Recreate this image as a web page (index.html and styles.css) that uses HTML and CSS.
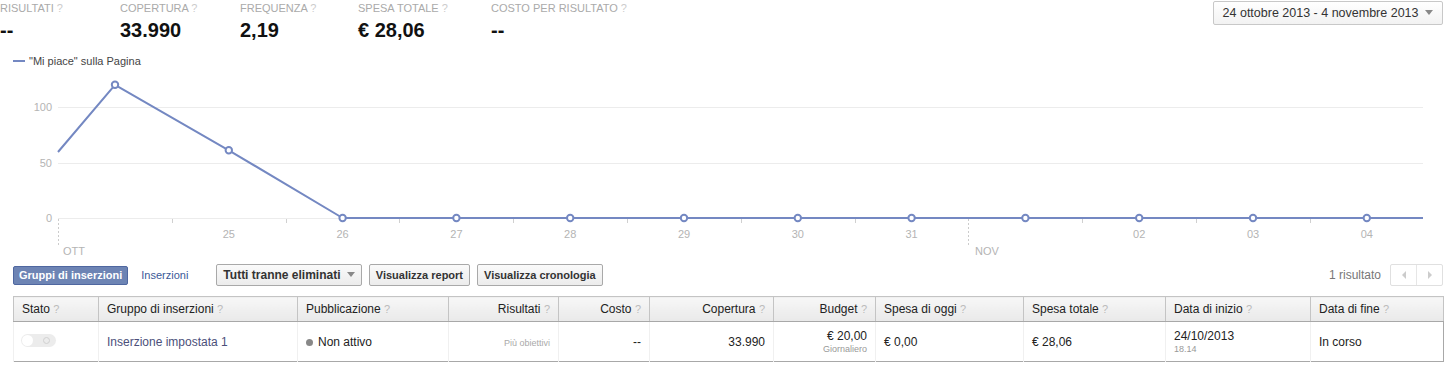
FILE: index.html
```html
<!DOCTYPE html>
<html lang="it">
<head>
<meta charset="UTF-8">
<title>Gruppi di inserzioni</title>
<link rel="stylesheet" href="styles.css">
</head>
<body>

<div class="summary">
    <div class="stats">
        <div class="stat"><div class="stat-label">Risultati <span class="q">?</span></div><div class="stat-value">--</div></div>
        <div class="stat"><div class="stat-label">Copertura <span class="q">?</span></div><div class="stat-value">33.990</div></div>
        <div class="stat"><div class="stat-label">Frequenza <span class="q">?</span></div><div class="stat-value">2,19</div></div>
        <div class="stat"><div class="stat-label">Spesa totale <span class="q">?</span></div><div class="stat-value">€ 28,06</div></div>
        <div class="stat"><div class="stat-label">Costo per risultato <span class="q">?</span></div><div class="stat-value">--</div></div>
    </div>
    <button class="date-range">24 ottobre 2013 - 4 novembre 2013 <span class="caret"></span></button>
</div>

<div class="legend"><span class="legend-line"></span>"Mi piace" sulla Pagina</div>

<svg class="chart" width="1455" height="183" viewBox="0 0 1455 183">
    <g class="grid">
        <line x1="58" y1="32.5" x2="1423" y2="32.5"/>
        <line x1="58" y1="88.5" x2="1423" y2="88.5"/>
        <line x1="58" y1="143.5" x2="1423" y2="143.5"/>
    </g>
    <g class="ylabels">
        <text x="52" y="36">100</text>
        <text x="52" y="92">50</text>
        <text x="52" y="147">0</text>
    </g>
    <g id="ticks" class="ticks"></g>
    <g class="month">
        <line x1="58.5" y1="144" x2="58.5" y2="172"/>
        <line x1="968.5" y1="144" x2="968.5" y2="172"/>
    </g>
    <g class="month-labels">
        <text x="63" y="180">OTT</text>
        <text x="975" y="180">NOV</text>
    </g>
    <g id="xlabels" class="xlabels"></g>
    <polyline id="series" class="series" points=""/>
    <g id="dots" class="dots"></g>
</svg>

<div class="toolbar">
    <div class="toolbar-left">
        <button class="tab active">Gruppi di inserzioni</button>
        <button class="tab">Inserzioni</button>
        <button class="btn filter">Tutti tranne eliminati <span class="caret"></span></button>
        <button class="btn">Visualizza report</button>
        <button class="btn">Visualizza cronologia</button>
    </div>
    <div class="toolbar-right">
        <span class="count">1 risultato</span>
        <div class="pager">
            <span class="pager-btn"><span class="arrow-left"></span></span>
            <span class="pager-btn"><span class="arrow-right"></span></span>
        </div>
    </div>
</div>

<table class="grid-table">
    <colgroup>
        <col style="width: 85px"><col style="width: 199px"><col style="width: 151px"><col style="width: 110px">
        <col style="width: 91px"><col style="width: 124px"><col style="width: 102px"><col style="width: 148px">
        <col style="width: 142px"><col style="width: 145px"><col style="width: 133px">
    </colgroup>
    <thead>
        <tr>
            <th>Stato <span class="q">?</span></th>
            <th>Gruppo di inserzioni <span class="q">?</span></th>
            <th>Pubblicazione <span class="q">?</span></th>
            <th class="num">Risultati <span class="q">?</span></th>
            <th class="num">Costo <span class="q">?</span></th>
            <th class="num">Copertura <span class="q">?</span></th>
            <th class="num">Budget <span class="q">?</span></th>
            <th>Spesa di oggi <span class="q">?</span></th>
            <th>Spesa totale <span class="q">?</span></th>
            <th>Data di inizio <span class="q">?</span></th>
            <th>Data di fine <span class="q">?</span></th>
        </tr>
    </thead>
    <tbody>
        <tr>
            <td><span class="toggle"><span class="knob"></span><span class="ring"></span></span></td>
            <td><a class="name">Inserzione impostata 1</a></td>
            <td><span class="dot"></span>Non attivo</td>
            <td class="num"><span class="muted">Più obiettivi</span></td>
            <td class="num">--</td>
            <td class="num">33.990</td>
            <td class="num">€ 20,00<div class="sub">Giornaliero</div></td>
            <td>€ 0,00</td>
            <td>€ 28,06</td>
            <td class="start">24/10/2013<div class="sub">18.14</div></td>
            <td>In corso</td>
        </tr>
    </tbody>
</table>

<script>
    // valori giornalieri dal 24/10 al 04/11
    const values = [120, 61, 0, 0, 0, 0, 0, 0, 0, 0, 0, 0];
    const step = 113.8;
    const x0 = 115;
    const zeroY = 143;
    const scale = 1.11;
    const svgNs = 'http://www.w3.org/2000/svg';

    const points = ['58,77'];
    const dots = document.getElementById('dots');
    values.forEach((v, i) => {
        const x = x0 + step * i;
        const y = zeroY - v * scale;
        points.push(x + ',' + y);
        const c = document.createElementNS(svgNs, 'circle');
        c.setAttribute('cx', x);
        c.setAttribute('cy', y);
        c.setAttribute('r', 3.2);
        dots.appendChild(c);
    });
    points.push('1423,' + zeroY);
    document.getElementById('series').setAttribute('points', points.join(' '));

    const days = ['', '25', '26', '27', '28', '29', '30', '31', '', '02', '03', '04'];
    const xlabels = document.getElementById('xlabels');
    days.forEach((d, i) => {
        if (!d) return;
        const t = document.createElementNS(svgNs, 'text');
        t.setAttribute('x', x0 + step * i);
        t.setAttribute('y', 163);
        t.textContent = d;
        xlabels.appendChild(t);
    });

    const ticks = document.getElementById('ticks');
    for (let k = 1; k < 12; k++) {
        if (k === 8) continue;
        const x = Math.round(58 + step * k) + 0.5;
        const l = document.createElementNS(svgNs, 'line');
        l.setAttribute('x1', x);
        l.setAttribute('x2', x);
        l.setAttribute('y1', 144);
        l.setAttribute('y2', 148);
        ticks.appendChild(l);
    }
</script>

</body>
</html>
```

FILE: styles.css
```css
body {
    margin: 0;
    font-family: "Liberation Sans", Arial, sans-serif;
    font-size: 12px;
    color: #333;
    background: #fff;
}

button {
    font-family: inherit;
    cursor: pointer;
}

.q {
    color: #bbb;
    font-weight: normal;
    font-size: 11px;
}

.summary {
    display: flex;
    justify-content: space-between;
    align-items: flex-start;
    padding-right: 12px;
}

.stats {
    display: grid;
    grid-template-columns: 120px 120px 118px 133px auto;
    padding-top: 1px;
}

.stat-label {
    font-size: 11px;
    line-height: 14px;
    color: #aaa;
    text-transform: uppercase;
}

.stat-label .q {
    color: #ccc;
}

.stat-value {
    margin-top: 3px;
    font-size: 20px;
    line-height: 24px;
    font-weight: bold;
    color: #111;
}

.date-range {
    margin-top: 1px;
    height: 24px;
    padding: 0 9px 0 9px;
    font-size: 12.5px;
    color: #333;
    background: linear-gradient(#fff, #f2f2f2);
    border: 1px solid #c8c8c8;
    border-radius: 2px;
}

.caret {
    display: inline-block;
    width: 0;
    height: 0;
    margin-left: 3px;
    vertical-align: 2px;
    border-left: 4px solid transparent;
    border-right: 4px solid transparent;
    border-top: 5px solid #888;
}

.legend {
    margin: 12px 0 0 13px;
    font-size: 11px;
    line-height: 14px;
    color: #444;
}

.legend-line {
    display: inline-block;
    width: 12px;
    height: 2px;
    margin-right: 4px;
    vertical-align: 3px;
    background: #7488c2;
}

.chart {
    display: block;
    margin-top: 7px;
}

.chart .grid line {
    stroke: #ececec;
    stroke-width: 1;
}

.chart text {
    font-family: "Liberation Sans", Arial, sans-serif;
    font-size: 11px;
    fill: #b4b4b4;
}

.chart .ylabels text {
    text-anchor: end;
}

.chart .xlabels text {
    text-anchor: middle;
}

.chart .ticks line {
    stroke: #d0d0d0;
}

.chart .month line {
    stroke: #ccc;
    stroke-dasharray: 2 2;
}

.series {
    fill: none;
    stroke: #7488c2;
    stroke-width: 2;
    stroke-linejoin: round;
}

.dots circle {
    fill: #fff;
    stroke: #7488c2;
    stroke-width: 2;
}

.toolbar {
    display: flex;
    justify-content: space-between;
    align-items: center;
    margin: 6px 12px 0 13px;
    height: 22px;
}

.toolbar-left,
.toolbar-right {
    display: flex;
    align-items: center;
}

.tab {
    height: 19px;
    padding: 0 5px;
    font-size: 11px;
    font-weight: bold;
    color: #3b5998;
    background: none;
    border: 1px solid transparent;
    border-radius: 2px;
}

.tab.active {
    color: #fff;
    background: #6d84b4;
    border-color: #4f67a0;
    margin-right: 7px;
}

.tab:not(.active) {
    font-weight: normal;
    margin-right: 22px;
}

.btn {
    height: 22px;
    padding: 0 6px;
    margin-right: 7px;
    font-size: 11px;
    font-weight: bold;
    color: #333;
    background: linear-gradient(#fafafa, #ececec);
    border: 1px solid #a9a9a9;
    border-radius: 2px;
}

.btn.filter {
    font-size: 12px;
    padding: 0 6px;
}

.count {
    margin-right: 9px;
    color: #777;
}

.pager {
    display: flex;
    border: 1px solid #e0e0e0;
    border-radius: 2px;
}

.pager-btn {
    display: flex;
    align-items: center;
    justify-content: center;
    width: 25px;
    height: 20px;
}

.pager-btn + .pager-btn {
    border-left: 1px solid #e6e6e6;
}

.arrow-left,
.arrow-right {
    width: 0;
    height: 0;
    border-top: 4px solid transparent;
    border-bottom: 4px solid transparent;
}

.arrow-left {
    border-right: 4px solid #ccc;
}

.arrow-right {
    border-left: 4px solid #ccc;
}

.grid-table {
    margin: 10px 0 0 13px;
    width: 1430px;
    border-collapse: collapse;
    table-layout: fixed;
    border: 1px solid #a8a8a8;
}

.grid-table th {
    height: 24px;
    padding: 0 8px;
    text-align: left;
    font-weight: normal;
    font-size: 12px;
    color: #222;
    background: linear-gradient(#f7f7f7, #e9e9e9);
    border: 1px solid #c4c4c4;
    border-bottom-color: #a8a8a8;
    white-space: nowrap;
}

.grid-table td {
    height: 39px;
    padding: 0 8px;
    font-size: 12px;
    color: #222;
    border-left: 1px solid #f0f0f0;
    vertical-align: middle;
    white-space: nowrap;
}

.grid-table .num {
    text-align: right;
}

.grid-table .sub {
    font-size: 9px;
    color: #999;
    line-height: 12px;
}

.name {
    color: #4b4f7a;
}

.muted {
    font-size: 9px;
    color: #aaa;
}

.dot {
    display: inline-block;
    width: 7px;
    height: 7px;
    margin-right: 5px;
    border-radius: 50%;
    background: #888;
}

.toggle {
    display: inline-flex;
    align-items: center;
    justify-content: space-between;
    width: 35px;
    height: 13px;
    margin-left: -1px;
    padding: 0 2px 0 1px;
    box-sizing: border-box;
    border-radius: 7px;
    background: #ececec;
}

.knob {
    width: 11px;
    height: 11px;
    border-radius: 50%;
    background: #fff;
}

.ring {
    width: 5px;
    height: 5px;
    margin-right: 4px;
    border-radius: 50%;
    border: 1px solid #d0d0d0;
}
```
